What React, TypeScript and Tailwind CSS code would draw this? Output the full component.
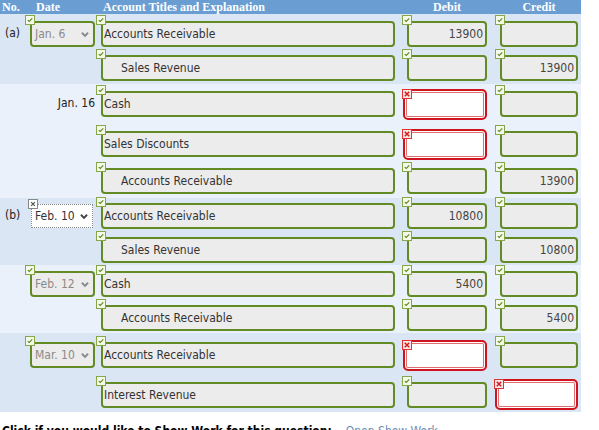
import React from 'react';

type State = 'ok' | 'err' | 'none';

interface Cell {
  value?: string;
  state: State;
}

interface DateCell {
  text: string;
  kind: 'select' | 'dotted' | 'plain';
}

interface Row {
  no?: string;
  date?: DateCell;
  account: string;
  indent?: boolean;
  debit: Cell;
  credit: Cell;
  height: string;
}

interface Group {
  bg: string;
  rows: Row[];
}

const groups: Group[] = [
  {
    bg: 'bg-[#dbe6f4]',
    rows: [
      { no: '(a)', date: { text: 'Jan. 6', kind: 'select' }, account: 'Accounts Receivable', debit: { value: '13900', state: 'ok' }, credit: { state: 'ok' }, height: 'h-[34px] pt-[7px] items-start' },
      { account: 'Sales Revenue', indent: true, debit: { state: 'ok' }, credit: { value: '13900', state: 'ok' }, height: 'h-[36px] pt-[7px] items-start' },
    ],
  },
  {
    bg: 'bg-[#eaf1fa]',
    rows: [
      { date: { text: 'Jan. 16', kind: 'plain' }, account: 'Cash', debit: { state: 'err' }, credit: { state: 'ok' }, height: 'h-[40px] items-center' },
      { account: 'Sales Discounts', debit: { state: 'err' }, credit: { state: 'ok' }, height: 'h-[40px] items-center' },
      { account: 'Accounts Receivable', indent: true, debit: { state: 'ok' }, credit: { value: '13900', state: 'ok' }, height: 'h-[34px] items-center' },
    ],
  },
  {
    bg: 'bg-[#dbe6f4]',
    rows: [
      { no: '(b)', date: { text: 'Feb. 10', kind: 'dotted' }, account: 'Accounts Receivable', debit: { value: '10800', state: 'ok' }, credit: { state: 'ok' }, height: 'h-[36px] items-center' },
      { account: 'Sales Revenue', indent: true, debit: { state: 'ok' }, credit: { value: '10800', state: 'ok' }, height: 'h-[31px] items-center' },
    ],
  },
  {
    bg: 'bg-[#eaf1fa]',
    rows: [
      { date: { text: 'Feb. 12', kind: 'select' }, account: 'Cash', debit: { value: '5400', state: 'ok' }, credit: { state: 'ok' }, height: 'h-[38px] items-center' },
      { account: 'Accounts Receivable', indent: true, debit: { state: 'ok' }, credit: { value: '5400', state: 'ok' }, height: 'h-[30px] items-center' },
    ],
  },
  {
    bg: 'bg-[#dbe6f4]',
    rows: [
      { date: { text: 'Mar. 10', kind: 'select' }, account: 'Accounts Receivable', debit: { state: 'err' }, credit: { state: 'ok' }, height: 'h-[44px] items-center' },
      { account: 'Interest Revenue', debit: { state: 'ok' }, credit: { state: 'err' }, height: 'h-[35px] items-center' },
    ],
  },
];

function Badge({ kind, pos }: { kind: 'ok' | 'err' | 'grey'; pos: string }) {
  if (kind === 'err') {
    return (
      <span className={`absolute ${pos} z-10 flex h-[10px] w-[10px] items-center justify-center border border-[#d33] bg-[#fbe9e9]`}>
        <svg viewBox="0 0 8 8" className="h-[6px] w-[6px]">
          <path d="M1 1L7 7M7 1L1 7" stroke="#d01c1c" strokeWidth="2" />
        </svg>
      </span>
    );
  }
  if (kind === 'grey') {
    return (
      <span className={`absolute ${pos} z-10 flex h-[10px] w-[10px] items-center justify-center border border-[#888] bg-white`}>
        <svg viewBox="0 0 8 8" className="h-[6px] w-[6px]">
          <path d="M1.5 1.5L6.5 6.5M6.5 1.5L1.5 6.5" stroke="#555" strokeWidth="1.6" />
        </svg>
      </span>
    );
  }
  return (
    <span className={`absolute ${pos} z-10 flex h-[10px] w-[10px] items-center justify-center border border-[#86a64a] bg-[#f4f9e8]`}>
      <svg viewBox="0 0 8 8" className="h-[6px] w-[6px]">
        <path d="M1 4.2L3 6L7 1.8" stroke="#5d8a1c" strokeWidth="1.5" fill="none" />
      </svg>
    </span>
  );
}

function Chevron({ color }: { color: string }) {
  return (
    <svg viewBox="0 0 10 8" className="h-[7px] w-[10px]">
      <path d="M1.5 2L5 5.5L8.5 2" stroke={color} strokeWidth="2.2" fill="none" />
    </svg>
  );
}

function AmountField({ cell, width, margin, errMargin, errWidth }: { cell: Cell; width: string; margin: string; errMargin: string; errWidth: string }) {
  if (cell.state === 'err') {
    return (
      <div className={`relative ${errMargin} ${errWidth} h-[31px] rounded-[5px] border-2 border-[#d0141e] bg-white shadow-[inset_0_0_0_1px_#ffffff,inset_0_0_0_2px_#e07070]`}>
        <Badge kind="err" pos="-left-[3px] -top-[2px]" />
      </div>
    );
  }
  return (
    <div className={`relative ${margin} ${width} flex h-[26px] items-center justify-end rounded-[4px] border-2 border-[#628b25] bg-[#ececec] pr-[2px] text-[#444]`}>
      <Badge kind="ok" pos="-left-[7px] -top-[8px]" />
      {cell.value}
    </div>
  );
}

function DateField({ date }: { date?: DateCell }) {
  if (!date) return <div className="w-[73px] shrink-0" />;
  if (date.kind === 'plain') {
    return <div className="w-[73px] shrink-0 self-center pr-[6px] pb-[3px] text-right text-[#222]">{date.text}</div>;
  }
  if (date.kind === 'dotted') {
    return (
      <div className="w-[73px] shrink-0">
        <div className="relative ml-[3px] flex h-[24px] w-[62px] items-center justify-between border border-dotted border-[#8a8a8a] bg-white pl-[3px] pr-[3px] text-[#333]">
          <Badge kind="grey" pos="-left-[4px] -top-[6px]" />
          <span>{date.text}</span>
          <Chevron color="#444" />
        </div>
      </div>
    );
  }
  return (
    <div className="w-[73px] shrink-0">
      <div className="relative ml-[2px] flex h-[26px] w-[65px] items-center justify-between rounded-[4px] border-2 border-[#628b25] bg-[#ececec] pl-[3px] pr-[3px] text-[#8a8a8a]">
        <Badge kind="ok" pos="-left-[7px] -top-[8px]" />
        <span>{date.text}</span>
        <Chevron color="#8a8a8a" />
      </div>
    </div>
  );
}

function EntryRow({ row }: { row: Row }) {
  return (
    <div className={`flex ${row.height}`}>
      <div className="w-[28px] shrink-0 self-center pl-[5px] pb-[3px] text-[#222]">{row.no}</div>
      <DateField date={row.date} />
      <div className={`relative flex h-[26px] w-[294px] shrink-0 items-center rounded-[4px] border-2 border-[#628b25] bg-[#ececec] text-[#333] ${row.indent ? 'pl-[18px]' : 'pl-[1px]'}`}>
        <Badge kind="ok" pos="-left-[7px] -top-[8px]" />
        {row.account}
      </div>
      <AmountField cell={row.debit} margin="ml-[12px]" width="w-[80px]" errMargin="ml-[8px]" errWidth="w-[84px]" />
      <AmountField cell={row.credit} margin="ml-[13px]" width="w-[78px]" errMargin="ml-[8px]" errWidth="w-[83px]" />
    </div>
  );
}

export default function App() {
  return (
    <div className="h-[430px] w-[599px] overflow-hidden bg-white font-['DejaVu_Sans_Condensed','DejaVu_Sans',sans-serif] text-[12px]">
      <div className="w-[581px]">
        <div className="flex h-[14px] items-center bg-[#6a9ed3] font-['Liberation_Serif',serif] text-[12px] font-bold leading-none text-white">
          <div className="w-[28px] pl-[2px]">No.</div>
          <div className="w-[73px] pl-[8px]">Date</div>
          <div className="w-[294px] pl-[2px]">Account Titles and Explanation</div>
          <div className="ml-[12px] w-[80px] text-center">Debit</div>
          <div className="ml-[13px] w-[78px] text-center">Credit</div>
        </div>
        {groups.map((g, i) => (
          <div key={i} className={g.bg}>
            {g.rows.map((r, j) => (
              <EntryRow key={j} row={r} />
            ))}
          </div>
        ))}
      </div>
      <div className="mt-[10px] flex items-baseline pl-[2px] text-[12px]">
        <span className="font-bold text-black">Click if you would like to Show Work for this question:</span>
        <span className="ml-[14px] text-[#6b8cb5]">Open Show Work</span>
      </div>
    </div>
  );
}
